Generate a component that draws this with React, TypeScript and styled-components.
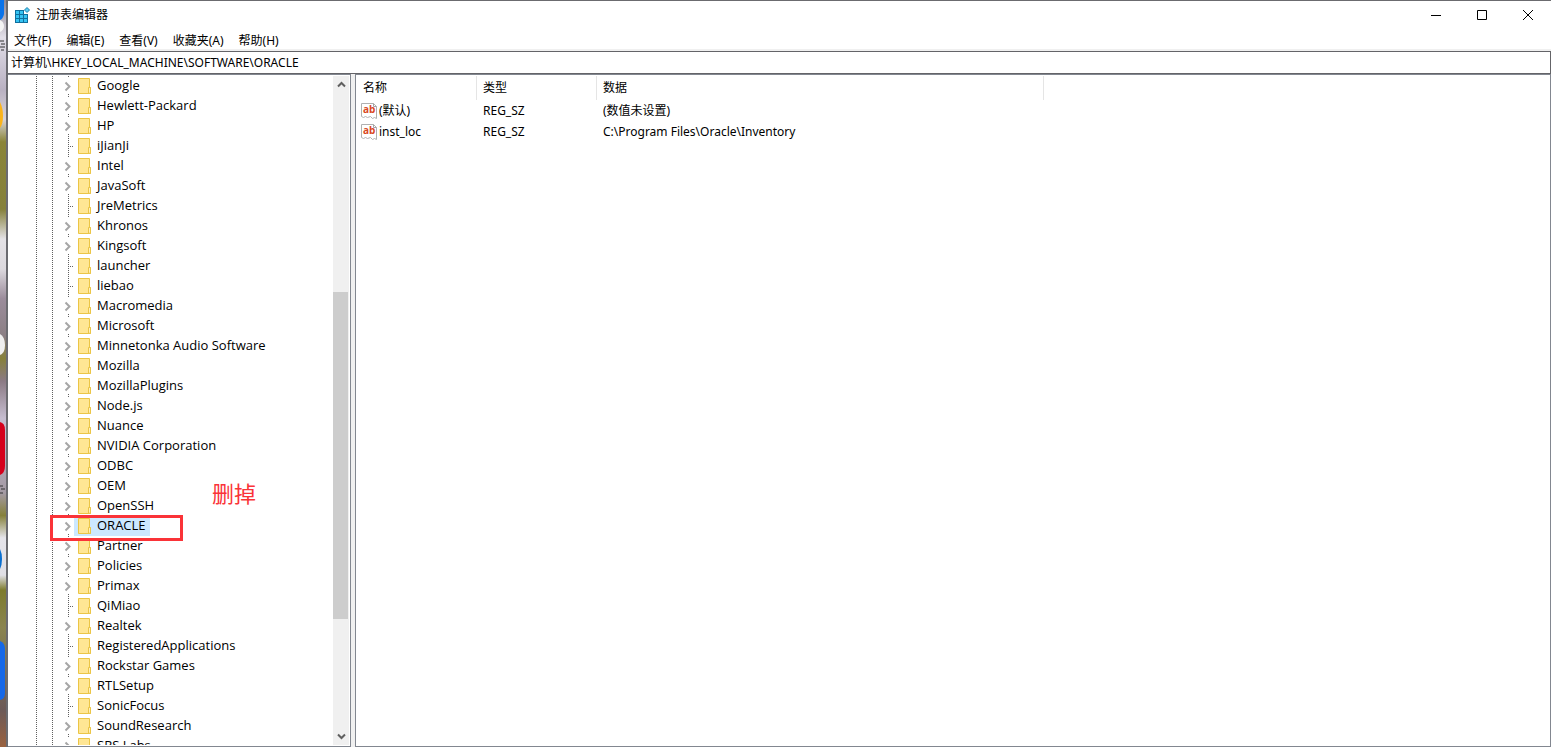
import React from 'react';
import styled, { createGlobalStyle } from 'styled-components';

const GlobalStyle = createGlobalStyle`
  * { box-sizing: border-box; }
  html, body, #root { height: 100%; margin: 0; }
  body {
    overflow: hidden;
    background: #8d8790;
    color: #000;
    font: 12px/20px "Noto Sans", "Noto Sans CJK SC", sans-serif;
  }
  button, input { font: inherit; color: inherit; margin: 0; }
`;

const Screen = styled.div`
  display: flex;
  height: 100vh;
`;

const Desktop = styled.svg`
  flex: none;
  width: 6px;
  height: 100%;
`;

const Window = styled.main`
  flex: 1;
  min-width: 0;
  display: flex;
  flex-direction: column;
  background: #fff;
  border-top: 1px solid #6b6b6f;
  border-left: 2px solid #6b6b70;
`;

const TitleBar = styled.header`
  display: flex;
  align-items: center;
  height: 28px;
  padding-left: 6px;
`;

const Title = styled.h1`
  flex: 1;
  margin: 0 0 0 5px;
  font-size: 12px;
  font-weight: 400;
`;

const CaptionButton = styled.button`
  display: grid;
  place-items: center;
  width: 46px;
  height: 28px;
  padding: 0;
  border: 0;
  background: none;
`;

const MenuBar = styled.nav`
  display: flex;
  gap: 15px;
  height: 22px;
  padding-left: 6px;
  border-bottom: 2px solid #f0f0f0;
`;

const MenuButton = styled.button`
  height: 24px;
  padding: 0;
  border: 0;
  background: none;
`;

const Address = styled.input`
  height: 23px;
  width: 100%;
  padding: 0 3px 2px;
  border: 1px solid #646468;
  border-left: 0;
  outline: 0;
  background: #fff;
`;

const Panes = styled.div`
  flex: 1;
  min-height: 0;
  display: flex;
  gap: 4px;
  background: #f0f0f0;
`;

const TreePane = styled.section`
  display: flex;
  flex: none;
  width: 343px;
  padding: 1px 1px 0 0;
  border: 1px solid #828790;
  border-left: 0;
  background: #fff;
`;

const Tree = styled.ul`
  flex: 1;
  margin: 0 0 1px;
  padding: 0;
  list-style: none;
  overflow: hidden;
`;

const TreeRow = styled.li`
  position: relative;
  display: flex;
  height: 20px;
`;

const Guides = styled.svg`
  flex: none;
  width: 52px;
  height: 20px;
`;

const Expander = styled.button`
  flex: none;
  width: 14px;
  height: 20px;
  padding: 0;
  border: 0;
  background: none;
  svg { display: block; }
`;

const Leaf = styled.svg`
  flex: none;
  width: 14px;
  height: 20px;
`;

const Key = styled.span<{ $selected: boolean }>`
  display: flex;
  gap: 5px;
  padding: 0 4px;
  white-space: nowrap;
  font-family: "Open Sans", sans-serif;
  font-size: 13px;
  line-height: 18px;
  background: ${(p) => (p.$selected ? '#cce8ff' : 'transparent')};
`;

const Highlight = styled.span`
  position: absolute;
  top: -1px;
  left: 42px;
  z-index: 1;
  width: 133px;
  height: 26px;
  border: 3px solid #fa3338;
  pointer-events: none;
`;

const Note = styled.span`
  position: absolute;
  top: -35px;
  left: 204px;
  font-size: 22px;
  line-height: 24px;
  color: #fa3338;
`;

const ScrollBar = styled.div`
  display: flex;
  flex-direction: column;
  width: 16px;
  margin-bottom: 1px;
  background: #f0f0f0;
`;

const ScrollButton = styled.button`
  display: grid;
  place-items: center;
  height: 17px;
  padding: 0;
  border: 0;
  background: none;
`;

const Track = styled.div<{ $grow: number }>`
  flex: ${(p) => p.$grow} 1 0;
`;

const Thumb = styled(Track)`
  margin-right: 1px;
  background: #cdcdcd;
`;

const ListPane = styled.section`
  flex: 1;
  min-width: 0;
  border: 1px solid #828790;
  background: #fff;
`;

const Values = styled.table`
  width: 688px;
  table-layout: fixed;
  border-collapse: separate;
  border-spacing: 0;
`;

const Head = styled.th<{ $width: number }>`
  width: ${(p) => p.$width}px;
  height: 25px;
  padding: 0 6px;
  font-weight: 400;
  text-align: left;
  background: linear-gradient(#e5e5e5, #e5e5e5) right bottom / 1px 24px no-repeat;

  &:first-child { padding-left: 7px; }
`;

const Cell = styled.td`
  height: 21px;
  padding: 0 6px;
  white-space: nowrap;
`;

const NameCell = styled(Cell)`
  padding-left: 5px;
`;

const ValueName = styled.span`
  display: flex;
  align-items: center;
  gap: 2px;
`;

const keys: [string, boolean][] = [
  ['Google', true], ['Hewlett-Packard', true], ['HP', true], ['iJianJi', false],
  ['Intel', true], ['JavaSoft', true], ['JreMetrics', false], ['Khronos', true],
  ['Kingsoft', true], ['launcher', false], ['liebao', false], ['Macromedia', true],
  ['Microsoft', true], ['Minnetonka Audio Software', true], ['Mozilla', true],
  ['MozillaPlugins', true], ['Node.js', true], ['Nuance', true],
  ['NVIDIA Corporation', true], ['ODBC', true], ['OEM', true], ['OpenSSH', true],
  ['ORACLE', true], ['Partner', true], ['Policies', true], ['Primax', true],
  ['QiMiao', false], ['Realtek', true], ['RegisteredApplications', false],
  ['Rockstar Games', true], ['RTLSetup', true], ['SonicFocus', false],
  ['SoundResearch', true], ['SRS Labs', true],
];

const values = [
  ['(默认)', 'REG_SZ', '(数值未设置)'],
  ['inst_loc', 'REG_SZ', 'C:\\Program Files\\Oracle\\Inventory'],
];

const dots = { stroke: '#606060', strokeDasharray: '1 1' };

const Wallpaper = () => (
  <Desktop viewBox="0 0 6 747" preserveAspectRatio="none" aria-hidden="true">
    <defs>
      <linearGradient id="wall" x1="0" y1="0" x2="0" y2="1">
        <stop offset="0" stopColor="#8f8792" />
        <stop offset=".05" stopColor="#e2dfe8" />
        <stop offset=".12" stopColor="#b9b1c2" />
        <stop offset=".16" stopColor="#d8d3d8" />
        <stop offset=".19" stopColor="#8a8438" />
        <stop offset=".28" stopColor="#85803a" />
        <stop offset=".32" stopColor="#e4e2e6" />
        <stop offset=".36" stopColor="#dcd9de" />
        <stop offset=".4" stopColor="#9b8c9b" />
        <stop offset=".45" stopColor="#8b7f84" />
        <stop offset=".48" stopColor="#86803a" />
        <stop offset=".51" stopColor="#8b7a84" />
        <stop offset=".56" stopColor="#c6bdd0" />
        <stop offset=".66" stopColor="#a49aa4" />
        <stop offset=".69" stopColor="#85803a" />
        <stop offset=".72" stopColor="#e5e4ea" />
        <stop offset=".77" stopColor="#e0dfe5" />
        <stop offset=".79" stopColor="#7d7b2c" />
        <stop offset=".84" stopColor="#8a8450" />
        <stop offset=".95" stopColor="#6c5a58" />
        <stop offset="1" stopColor="#9a6240" />
      </linearGradient>
    </defs>
    <rect width="6" height="747" fill="url(#wall)" />
    <path d="M0 0h4v14q-1 5-4 6z" fill="#0a73ea" />
    <path d="M0 20q4 2 4 6t-4 6z" fill="#f4f4f4" />
    <path d="M0 102q3 6 3 14t-3 12z" fill="#fbb41c" />
    <path d="M0 334q5 3 5 11t-5 10z" fill="#efefef" />
    <path d="M0 422q5 1 5 8v36q0 7-5 9z" fill="#d5001c" />
    <path d="M0 549q2 4 2 10t-2 10z" fill="#0a6fd0" />
    <path d="M0 641q5 2 5 8v44q0 6-5 7z" fill="#1668e8" />
    <path d="M0 41h4M1 44h4M0 47h5M1 50h3M0 486h3M1 489h4M0 493h3" stroke="#333" />
  </Desktop>
);

const AppIcon = () => (
  <svg width="17" height="16" viewBox="0 0 17 16" aria-hidden="true">
    <path d="M1 3h9v4h4v9H1z" fill="#0f6f9e" />
    <path d="M2 4h3v3H2zM6 4h3v3H6zM2 8h3v3H2zM6 8h3v3H6zM10 8h3v3h-3zM2 12h3v3H2zM6 12h3v3H6zM10 12h3v3h-3z" fill="#35c3f2" />
    <path d="m13 .5 2.500 2.500L13 5.500 10.500 3z" fill="#5bcdf4" stroke="#1580ae" />
  </svg>
);

const Folder = () => (
  <svg width="14" height="20" viewBox="0 0 14 20" aria-hidden="true">
    <path d="M.5 2.500h11v9h1v6H.5z" fill="#ffe694" stroke="#ebc546" />
    <path d="M10.500 17v-5.500h2v6z" fill="#fff0b8" stroke="#ebc546" />
  </svg>
);

const StringIcon = () => (
  <svg width="16" height="16" viewBox="0 0 16 16" aria-hidden="true">
    <path d="M.5.500h12l3 3v12l-2-1-2 1-2-2-3 1-2-1-2 1-2-1z" fill="#fff" stroke="#b0b0b0" />
    <path d="M12.500.500v3h3" fill="none" stroke="#a5a5a5" />
    <text x="2" y="10" fontFamily="Open Sans, sans-serif" fontSize="10" fontWeight="700" fill="#d9481f">ab</text>
  </svg>
);

export default function App() {
  return (
    <>
      <GlobalStyle />
      <Screen>
        <Wallpaper />
        <Window>
          <TitleBar>
            <AppIcon />
            <Title>注册表编辑器</Title>
            <CaptionButton aria-label="最小化">
              <svg width="10" height="10"><path d="M0 5.500h10" stroke="#000" /></svg>
            </CaptionButton>
            <CaptionButton aria-label="最大化">
              <svg width="10" height="10"><path d="M.5.500h9v9h-9z" fill="none" stroke="#000" /></svg>
            </CaptionButton>
            <CaptionButton aria-label="关闭">
              <svg width="10" height="10"><path d="m0 0 10 10M10 0 0 10" stroke="#000" /></svg>
            </CaptionButton>
          </TitleBar>
          <MenuBar>
            {['文件(F)', '编辑(E)', '查看(V)', '收藏夹(A)', '帮助(H)'].map((m) => (
              <MenuButton key={m}>{m}</MenuButton>
            ))}
          </MenuBar>
          <Address aria-label="地址" defaultValue={'计算机\\HKEY_LOCAL_MACHINE\\SOFTWARE\\ORACLE'} />
          <Panes>
            <TreePane>
              <Tree role="tree">
                {keys.map(([name, children]) => (
                  <TreeRow key={name} role="treeitem" aria-selected={name === 'ORACLE'}>
                    <Guides aria-hidden="true">
                      <path d="M28.500 0v20M44.500 0v20" {...dots} />
                    </Guides>
                    {children ? (
                      <Expander aria-label={`展开 ${name}`}>
                        <svg width="14" height="20">
                          <path d="M8.500 0v2M8.500 18v2" {...dots} />
                          <path d="m5.500 6.500 4 4-4 4" fill="none" stroke="#a6a6a6" strokeWidth="2" />
                        </svg>
                      </Expander>
                    ) : (
                      <Leaf aria-hidden="true">
                        <path d="M8.500 0v20M8 10.500h6" {...dots} />
                      </Leaf>
                    )}
                    <Key $selected={name === 'ORACLE'}>
                      <Folder />
                      {name}
                    </Key>
                    {name === 'ORACLE' && (
                      <>
                        <Highlight />
                        <Note>删掉</Note>
                      </>
                    )}
                  </TreeRow>
                ))}
              </Tree>
              <ScrollBar>
                <ScrollButton aria-label="向上滚动">
                  <svg width="9" height="7"><path d="m1 5.500 3.500-3.500L8 5.500" fill="none" stroke="#606060" strokeWidth="2" /></svg>
                </ScrollButton>
                <Track $grow={199} />
                <Thumb $grow={327} />
                <Track $grow={109} />
                <ScrollButton aria-label="向下滚动">
                  <svg width="9" height="7"><path d="m1 1.500 3.500 3.500L8 1.500" fill="none" stroke="#606060" strokeWidth="2" /></svg>
                </ScrollButton>
              </ScrollBar>
            </TreePane>
            <ListPane>
              <Values>
                <thead>
                  <tr>
                    <Head $width={121}>名称</Head>
                    <Head $width={120}>类型</Head>
                    <Head $width={447}>数据</Head>
                  </tr>
                </thead>
                <tbody>
                  {values.map(([name, type, data]) => (
                    <tr key={name}>
                      <NameCell>
                        <ValueName>
                          <StringIcon />
                          {name}
                        </ValueName>
                      </NameCell>
                      <Cell>{type}</Cell>
                      <Cell>{data}</Cell>
                    </tr>
                  ))}
                </tbody>
              </Values>
            </ListPane>
          </Panes>
        </Window>
      </Screen>
    </>
  );
}
